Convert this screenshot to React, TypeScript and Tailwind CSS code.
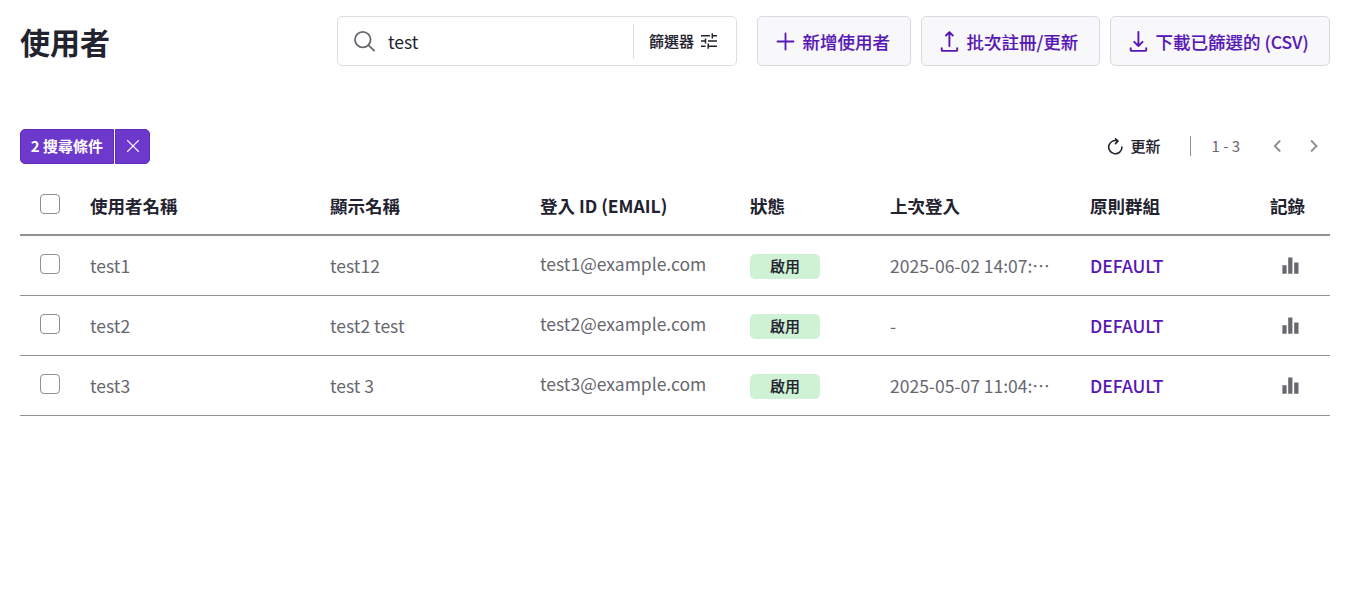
import React from 'react';

const ROWS = [
  { name: 'test1', display: 'test12', email: 'test1@example.com', last: '2025-06-02 14:07:32' },
  { name: 'test2', display: 'test2 test', email: 'test2@example.com', last: '-' },
  { name: 'test3', display: 'test 3', email: 'test3@example.com', last: '2025-05-07 11:04:18' },
];

const GRID = 'grid grid-cols-[50px_240px_210px_210px_140px_200px_180px_1fr] pl-5';
const MEDIUM = 'font-medium [-webkit-text-stroke:0.12px_currentColor]';

function ActionButton({ width, icon, children }: { width: string; icon: React.ReactNode; children: React.ReactNode }) {
  return (
    <button
      className={`flex h-[50px] ${width} items-center rounded-[5px] border border-[#d9dadf] bg-[#f8f8fb] pl-[18px] text-[17.5px] whitespace-nowrap text-[#5717b5] ${MEDIUM}`}
    >
      {icon}
      <span className="ml-[6.5px] pt-[2px]">{children}</span>
    </button>
  );
}

function PlusIcon() {
  return (
    <svg className="size-5 overflow-visible" viewBox="0 0 20 20" fill="none" stroke="currentColor" strokeWidth="1.8" strokeLinecap="round">
      <path d="M9.5 2.5v16M1.5 10.5h16" />
    </svg>
  );
}

function UploadIcon() {
  return (
    <svg className="size-5 overflow-visible" viewBox="0 0 20 20" fill="none" stroke="currentColor" strokeWidth="1.9" strokeLinecap="round" strokeLinejoin="round">
      <path d="M9.4 15V1.1M6 4.5l3.4-3.4 3.4 3.4M1.7 17.2v1.7q0 1 1 1h13.5q1 0 1-1v-1.7" />
    </svg>
  );
}

function DownloadIcon() {
  return (
    <svg className="size-5 overflow-visible" viewBox="0 0 20 20" fill="none" stroke="currentColor" strokeWidth="1.9" strokeLinecap="round" strokeLinejoin="round">
      <path d="M9.4 1V15M5.2 10.8l4.2 4.2 4.2-4.2M1.7 17.2v1.7q0 1 1 1h13.5q1 0 1-1v-1.7" />
    </svg>
  );
}

function Checkbox() {
  return <span role="checkbox" aria-checked="false" className="block size-5 rounded-[4px] border border-[#8f8f94] bg-white" />;
}

export default function App() {
  return (
    <main
      lang="zh-TW"
      className="h-[599px] overflow-hidden bg-white px-5 pt-4 pr-[21px] font-['Noto_Sans_CJK_TC',sans-serif] text-[17.5px] text-[#23222f]"
    >
      <header className="flex h-[50px] items-center">
        <h1 className="w-[317px] text-[30px] leading-[50px] font-bold">使用者</h1>
        <div className="flex h-[50px] w-[400px] items-center rounded-[5px] border border-[#dfdfe2]">
          <svg className="ml-4 size-[22px]" viewBox="0 0 22 22" fill="none" stroke="#68676f" strokeWidth="1.8">
            <circle cx="8.8" cy="9.6" r="7.8" />
            <path d="M14.3 15.1l6.3 6.1" />
          </svg>
          <span className="ml-3 w-[245px] pt-[2px] text-[17.5px]">test</span>
          <span className="h-[35px] w-px bg-[#dfdfe2]" />
          <span className={`ml-[15px] text-[15px] ${MEDIUM}`}>篩選器</span>
          <svg className="ml-[7px] size-4" viewBox="0 0 16 16" fill="none" stroke="currentColor" strokeWidth="1.5">
            <path d="M0 2.8h9M11.3 .2v5.2M11.3 2.8H16M0 8h4.5M4.5 5.4v5.2M7 8h9M0 13.2h4.5M7.2 10.6v5.2M7.2 13.2H16" />
          </svg>
        </div>
        <div className="ml-5 flex gap-[10px]">
          <ActionButton width="w-[154px]" icon={<PlusIcon />}>新增使用者</ActionButton>
          <ActionButton width="w-[179px]" icon={<UploadIcon />}>批次註冊/更新</ActionButton>
          <ActionButton width="w-[220px]" icon={<DownloadIcon />}>下載已篩選的 (CSV)</ActionButton>
        </div>
      </header>

      <div className="mt-[63px] flex h-[35px] items-center text-[15px]">
        <div className="flex gap-px text-white">
          <span className="flex h-[35px] w-[94px] items-center justify-center rounded-l-[5px] border border-[#5f2bbd] bg-[#6d38cc] font-bold">2 搜尋條件</span>
          <button className="flex h-[35px] w-[35px] items-center justify-center rounded-r-[5px] border border-[#5f2bbd] bg-[#6d38cc]">
            <svg className="mb-px size-3" viewBox="0 0 12 12" stroke="currentColor" strokeWidth="1.3" strokeLinecap="round">
              <path d="M.6.6l10.8 10.8M11.4.6L.6 11.4" />
            </svg>
          </button>
        </div>
        <button className={`ml-auto flex items-center ${MEDIUM}`}>
          <svg className="mb-px h-[17px] w-4" viewBox="0 0 16 17" fill="none" stroke="currentColor" strokeWidth="1.6" strokeLinecap="round" strokeLinejoin="round">
            <path d="M11 3.1A6.6 6.6 0 1 0 14.9 9M8.5.8L11 3.1 8.5 5.6" />
          </svg>
          <span className="mr-[0.5px] ml-[7.5px]">更新</span>
        </button>
        <span className="mb-px ml-[29px] h-5 w-px bg-[#8f8f94]" />
        <span className="ml-[20.5px] w-[61.5px] text-[#68676f]">1 - 3</span>
        <svg className="mb-px size-3" viewBox="0 0 12 12" fill="none" stroke="#8b8b8f" strokeWidth="1.8">
          <path d="M7.2.5L1.8 6l5.4 5.5" />
        </svg>
        <svg className="mr-[9px] mb-px ml-6 size-3" viewBox="0 0 12 12" fill="none" stroke="#8b8b8f" strokeWidth="1.8">
          <path d="M2.1.5L7.5 6l-5.4 5.5" />
        </svg>
      </div>

      <section className="mt-[10px]">
        <div className={`${GRID} h-[62px] border-b-2 border-[#919195] leading-[24px] font-bold`}>
          <div className="pt-5"><Checkbox /></div>
          <div className="pt-5">使用者名稱</div>
          <div className="pt-5">顯示名稱</div>
          <div className="pt-5">登入 ID (EMAIL)</div>
          <div className="pt-5">狀態</div>
          <div className="pt-5">上次登入</div>
          <div className="pt-5">原則群組</div>
          <div className="pt-5">記錄</div>
        </div>
        {ROWS.map((row) => (
          <div key={row.name} className={`${GRID} h-[60px] border-b border-[#919195] leading-[24px] text-[#68676f]`}>
            <div className="pt-[18px]"><Checkbox /></div>
            <div className="pt-[18px]">{row.name}</div>
            <div className="pt-[18px]">{row.display}</div>
            <div className="pt-4">{row.email}</div>
            <div className="pt-[18px]">
              <span className={`flex h-[25px] w-[70px] items-center justify-center rounded-[5px] bg-[#cff2d5] pb-px text-[15px] text-[#23222f] ${MEDIUM}`}>啟用</span>
            </div>
            <div className="mt-[18px] h-6 w-[160px] truncate">{row.last}</div>
            <div className="pt-[18px] font-medium text-[#5717b5]">DEFAULT</div>
            <div className="pt-[21px] pl-3">
              <svg className="size-[18px]" viewBox="0 0 18 18" fill="#68676f">
                <path d="M.4 8.3h4.2v8.4H.4zM6.2.4h4.2v16.3H6.2zM12.2 5.4h4.3v11.3h-4.3z" />
              </svg>
            </div>
          </div>
        ))}
      </section>
    </main>
  );
}
